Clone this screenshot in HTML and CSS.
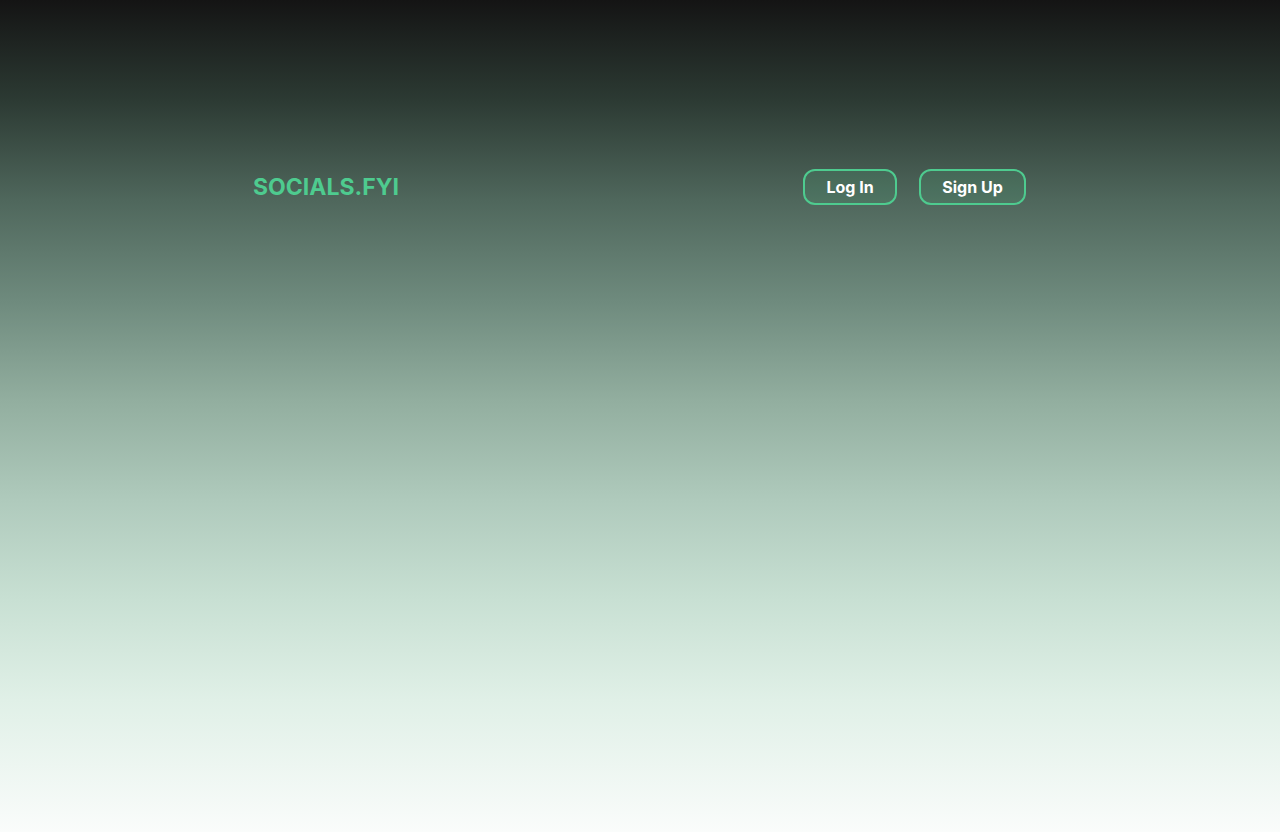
FILE: index.html
```html
<!DOCTYPE html>
<html lang="en">
<head>
<meta charset="utf-8">
<title>socials.fyi</title>
<link rel="stylesheet" href="styles.css">
</head>
<body>
<div class="page">
  <header class="header">
    <a class="logo" href="#">SOCIALS.FYI</a>
    <nav class="actions">
      <a class="btn btn-login" href="#">Log In</a>
      <a class="btn btn-signup" href="#">Sign Up</a>
    </nav>
  </header>
</div>
</body>
</html>
```
FILE: styles.css
```css
html, body {
  margin: 0;
  padding: 0;
  height: 100%;
}
body {
  font-family: Inter, "Noto Sans", sans-serif;
  background: linear-gradient(180deg,
    #141414 0px,
    #2c3a33 100px,
    #4f675c 200px,
    #6e8a7d 300px,
    #92ae9f 400px,
    #afcabc 500px,
    #c8e0d3 600px,
    #e0f0e7 700px,
    #fafcfb 832px);
  min-height: 832px;
}
.page {
  width: 773px;
  padding: 169px 1px 0 0;
  margin: 0 auto;
}
.header {
  display: flex;
  align-items: center;
  justify-content: space-between;
  height: 36px;
}
.logo {
  color: #4ecb8f;
  font-weight: 700;
  font-size: 23px;
  text-decoration: none;
}
.actions {
  display: flex;
  gap: 22px;
}
.btn {
  display: flex;
  align-items: center;
  justify-content: center;
  height: 36px;
  box-sizing: border-box;
  border: 2px solid #4ecb8f;
  border-radius: 12px;
  background: rgba(78, 203, 143, 0.12);
  color: #ffffff;
  font-weight: 700;
  font-size: 16px;
  text-decoration: none;
}
.btn-login { width: 94px; }
.btn-signup { width: 107px; }
```
